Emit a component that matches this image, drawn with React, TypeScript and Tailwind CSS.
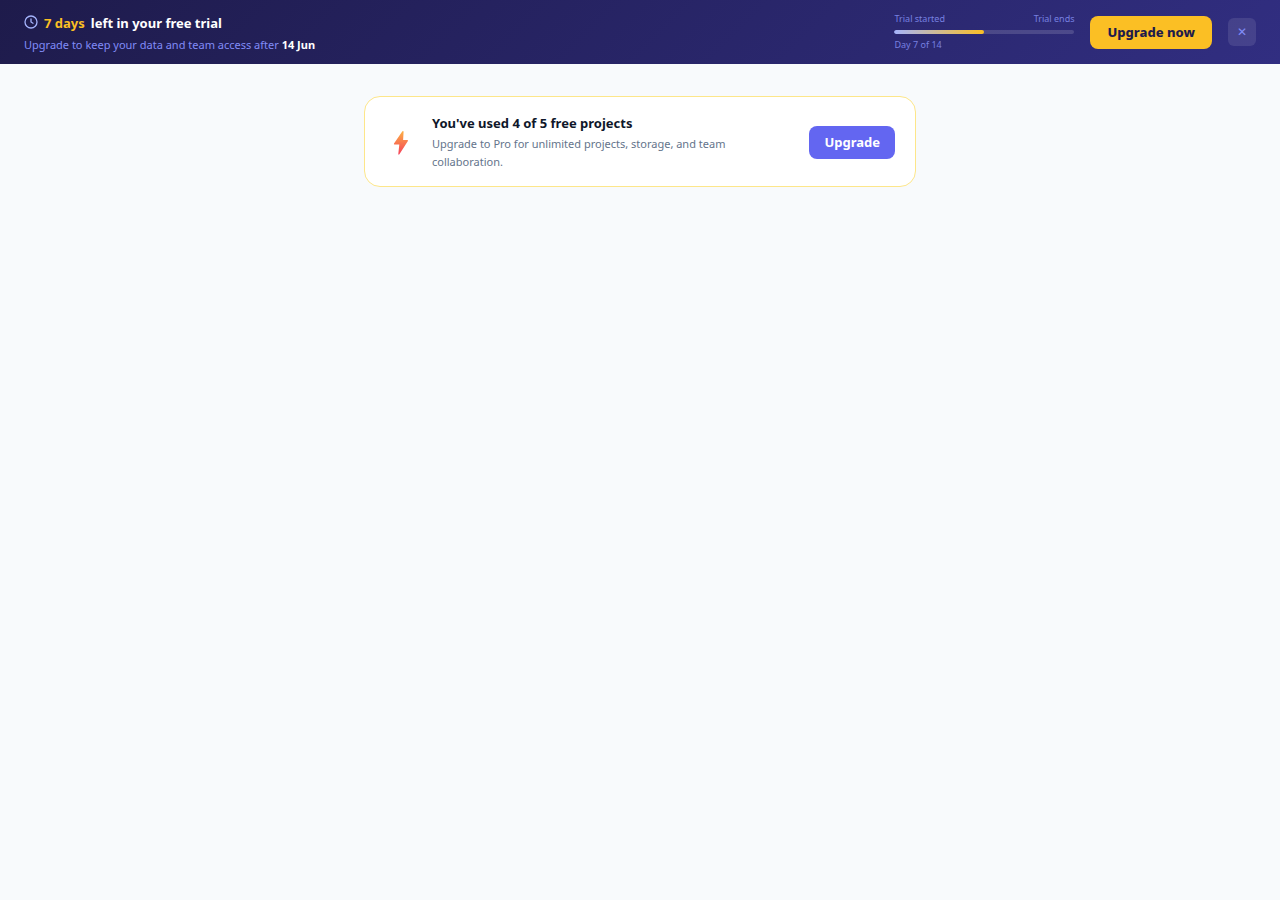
import { useState } from "react";

const TRIAL_LENGTH = 14;

interface BannerProps {
  day: number;
  endDate: string;
  onDismiss: () => void;
}

function TrialBanner({ day, endDate, onDismiss }: BannerProps) {
  const daysLeft = TRIAL_LENGTH - day;

  return (
    <header className="flex min-h-16 items-center gap-4 bg-[linear-gradient(135deg,#1e1b4b,#312e81)] px-6">
      <div className="flex-1 pt-0.5">
        <p className="flex items-start gap-1.5 text-[13px] leading-5 font-bold text-white">
          <svg className="mt-0.5" width="14" height="14" viewBox="0 0 14 14" fill="none" stroke="#a5b4fc" strokeWidth="1.3" strokeLinecap="round" aria-hidden="true">
            <circle cx="7" cy="7" r="6" />
            <path d="M7 4v3l2 1.2" />
          </svg>
          <span className="text-[#fbbf24]">{daysLeft} days</span>
          <span>left in your free trial</span>
        </p>
        <p className="mt-1 text-[11px] leading-4 text-[#818cf8]">
          Upgrade to keep your data and team access after{" "}
          <strong className="font-bold text-white">{endDate}</strong>
        </p>
      </div>

      {/* Trial progress */}
      <div className="w-[180px] text-[9px] leading-[14px] text-[#7780e0]">
        <div className="flex justify-between">
          <span>Trial started</span>
          <span>Trial ends</span>
        </div>
        <div className="my-1 h-1 overflow-hidden rounded-full bg-white/15">
          <div
            className="h-full rounded-full bg-[linear-gradient(90deg,#a5b4fc,#fbbf24)]"
            style={{ width: `${(day / TRIAL_LENGTH) * 100}%` }}
          />
        </div>
        <p>Day {day} of {TRIAL_LENGTH}</p>
      </div>

      <button type="button" className="h-[33px] rounded-lg bg-[#fbbf24] px-[17px] pt-0.5 text-[13px] font-extrabold text-[#1e1b4b]">
        Upgrade now
      </button>
      <button
        type="button"
        aria-label="Dismiss"
        onClick={onDismiss}
        className="flex size-7 items-center justify-center rounded-md bg-white/10 text-[12px] text-[#818cf8]"
      >
        ✕
      </button>
    </header>
  );
}

function UsageCard() {
  return (
    <section className="flex items-center gap-4 rounded-2xl border border-[#fde68a] bg-white px-5 pt-4 pb-[15px]">
      <svg className="shrink-0" width="31" height="32" viewBox="0 0 31 32" aria-hidden="true">
        <defs>
          <linearGradient id="bolt" x1="0" y1="0" x2="0" y2="1">
            <stop offset="0" stopColor="#fcb045" />
            <stop offset="1" stopColor="#f5405a" />
          </linearGradient>
        </defs>
        <path d="M17.2 5.4 9 17.6q-.4.9.5.9h4.8l-1 9.6q.2 1.2 1.1.2l8.5-13.3q.4-1-.6-1h-4.2l.5-8.4q-.4-1-1.4-.2z" fill="url(#bolt)" />
      </svg>
      <div className="flex-1">
        <h2 className="text-[13px] leading-5 font-bold text-[#0f172a]">You've used 4 of 5 free projects</h2>
        <p className="mt-0.5 max-w-[320px] text-[11px] leading-[18px] text-[#64748b]">
          Upgrade to Pro for unlimited projects, storage, and team collaboration.
        </p>
      </div>
      <button type="button" className="h-[33px] rounded-lg bg-[#6366f1] px-[15px] pt-0.5 text-[13px] font-bold text-white">
        Upgrade
      </button>
    </section>
  );
}

export default function App() {
  const [showBanner, setShowBanner] = useState(true);

  return (
    <div className="min-h-screen bg-[#f8fafc] font-['Noto_Sans',sans-serif]">
      {showBanner && <TrialBanner day={7} endDate="14 Jun" onDismiss={() => setShowBanner(false)} />}
      <main className="mx-auto max-w-[600px] px-6 py-8">
        <UsageCard />
      </main>
    </div>
  );
}
